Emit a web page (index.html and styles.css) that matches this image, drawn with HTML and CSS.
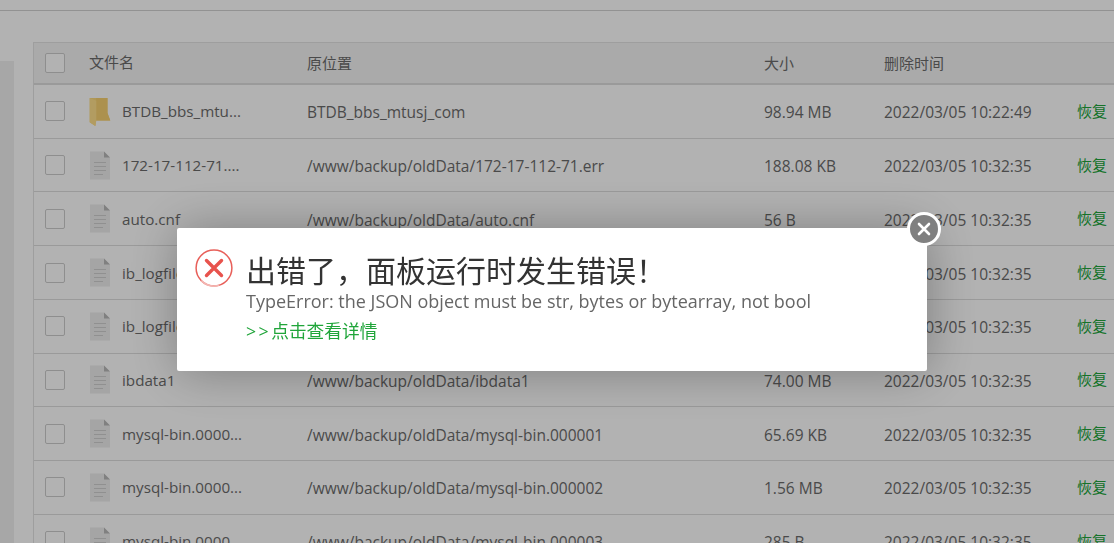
FILE: index.html
```html
<!DOCTYPE html>
<html lang="zh-CN">
<head>
<meta charset="utf-8">
<title>回收站</title>
<link rel="stylesheet" href="styles.css">
</head>
<body>
<svg class="defs" width="0" height="0" aria-hidden="true">
  <symbol id="doc" viewBox="0 0 22 28">
    <path d="M1 0H15L21 6V28H1Z" fill="#ececec"/>
    <path d="M15 0L21 6H15Z" fill="#b8b8b8"/>
    <path d="M5 11H17M5 15H17M5 19H17M5 23H14" stroke="#cfcfcf" stroke-width="1" fill="none"/>
  </symbol>
  <symbol id="folder" viewBox="0 0 22 31">
    <path d="M0 1H19V17L22 25H7L6 31L0 27Z" fill="#fbd87c"/>
    <path d="M7 1H19V17L22 25H7Z" fill="#f6d070"/>
    <path d="M0 1L7 4V25L6 31L0 27Z" fill="#ffe08c"/>
  </symbol>
</svg>
<div class="topbar"></div>
<div class="page">
  <div class="side"></div>
  <div class="table">
    <div class="row head">
      <span class="check"></span>
      <span class="name">文件名</span>
      <span class="path">原位置</span>
      <span class="size">大小</span>
      <span class="time">删除时间</span>
      <span class="act"></span>
    </div>
    <div class="row">
      <span class="check"></span>
      <span class="name"><svg class="ico"><use href="#folder"/></svg>BTDB_bbs_mtu...</span>
      <span class="path">BTDB_bbs_mtusj_com</span>
      <span class="size">98.94 MB</span>
      <span class="time">2022/03/05 10:22:49</span>
      <span class="act">恢复</span>
    </div>
    <div class="row">
      <span class="check"></span>
      <span class="name"><svg class="ico"><use href="#doc"/></svg>172-17-112-71....</span>
      <span class="path">/www/backup/oldData/172-17-112-71.err</span>
      <span class="size">188.08 KB</span>
      <span class="time">2022/03/05 10:32:35</span>
      <span class="act">恢复</span>
    </div>
    <div class="row">
      <span class="check"></span>
      <span class="name"><svg class="ico"><use href="#doc"/></svg>auto.cnf</span>
      <span class="path">/www/backup/oldData/auto.cnf</span>
      <span class="size">56 B</span>
      <span class="time">2022/03/05 10:32:35</span>
      <span class="act">恢复</span>
    </div>
    <div class="row">
      <span class="check"></span>
      <span class="name"><svg class="ico"><use href="#doc"/></svg>ib_logfile0</span>
      <span class="path">/www/backup/oldData/ib_logfile0</span>
      <span class="size">48.00 MB</span>
      <span class="time">2022/03/05 10:32:35</span>
      <span class="act">恢复</span>
    </div>
    <div class="row">
      <span class="check"></span>
      <span class="name"><svg class="ico"><use href="#doc"/></svg>ib_logfile1</span>
      <span class="path">/www/backup/oldData/ib_logfile1</span>
      <span class="size">48.00 MB</span>
      <span class="time">2022/03/05 10:32:35</span>
      <span class="act">恢复</span>
    </div>
    <div class="row">
      <span class="check"></span>
      <span class="name"><svg class="ico"><use href="#doc"/></svg>ibdata1</span>
      <span class="path">/www/backup/oldData/ibdata1</span>
      <span class="size">74.00 MB</span>
      <span class="time">2022/03/05 10:32:35</span>
      <span class="act">恢复</span>
    </div>
    <div class="row">
      <span class="check"></span>
      <span class="name"><svg class="ico"><use href="#doc"/></svg>mysql-bin.0000...</span>
      <span class="path">/www/backup/oldData/mysql-bin.000001</span>
      <span class="size">65.69 KB</span>
      <span class="time">2022/03/05 10:32:35</span>
      <span class="act">恢复</span>
    </div>
    <div class="row">
      <span class="check"></span>
      <span class="name"><svg class="ico"><use href="#doc"/></svg>mysql-bin.0000...</span>
      <span class="path">/www/backup/oldData/mysql-bin.000002</span>
      <span class="size">1.56 MB</span>
      <span class="time">2022/03/05 10:32:35</span>
      <span class="act">恢复</span>
    </div>
    <div class="row">
      <span class="check"></span>
      <span class="name"><svg class="ico"><use href="#doc"/></svg>mysql-bin.0000...</span>
      <span class="path">/www/backup/oldData/mysql-bin.000003</span>
      <span class="size">285 B</span>
      <span class="time">2022/03/05 10:32:35</span>
      <span class="act">恢复</span>
    </div>
  </div>
</div>
<div class="shade"></div>
<div class="dialog">
  <svg class="err" viewBox="0 0 38 38">
    <circle cx="19" cy="19" r="17.9" fill="none" stroke="#e8605a" stroke-width="1.5"/>
    <path d="M6.3 31.7A17.9 17.9 0 0 0 24 36.2" fill="none" stroke="#f3b5b1" stroke-width="1.7"/>
    <path d="M11.5 11.5L26.5 26.5M26.5 11.5L11.5 26.5" stroke="#e8534d" stroke-width="3.4" stroke-linecap="round" fill="none"/>
  </svg>
  <div class="msg">
    <div class="title">出错了，面板运行时发生错误！</div>
    <div class="detail">TypeError: the JSON object must be str, bytes or bytearray, not bool</div>
    <div class="more"><span class="arrows">&gt;&gt;</span>点击查看详情</div>
  </div>
  <div class="close">
    <svg viewBox="0 0 14 14" width="14" height="14"><path d="M2 2L12 12M12 2L2 12" stroke="#fff" stroke-width="2.6" stroke-linecap="round"/></svg>
  </div>
</div>
</body>
</html>
```

FILE: styles.css
```css
* { box-sizing: border-box; }
html, body { margin: 0; height: 543px; overflow: hidden; }
body {
  background: #fff;
  font-family: "Open Sans", "Noto Sans CJK SC", sans-serif;
  color: #666;
}
.defs { position: absolute; }
.topbar { height: 11px; border-bottom: 1px solid #d2d2d2; }
.page { display: flex; align-items: flex-start; }
.side { width: 14px; height: 482px; margin-top: 50px; background: #efefef; flex: none; }
.table {
  margin: 31px 0 0 19px;
  width: 1120px;
  flex: none;
  border-left: 1px solid #e3e3e3;
  border-top: 1px solid #e3e3e3;
}
.row {
  display: grid;
  grid-template-columns: 55px 218px 457px 120px 193px 80px;
  align-items: center;
  height: 53.72px;
  border-bottom: 1px solid #ddd;
  font-size: 15.5px;
  color: #6b6b6b;
}
.row.head {
  height: 42px;
  background: #f4f4f4;
  border-bottom: 2px solid #ddd;
  font-size: 15px;
}
.check {
  width: 20px;
  height: 20px;
  margin-left: 11px;
  border: 1px solid #ccc;
  border-radius: 2px;
  background: #fff;
}
.name { display: flex; align-items: center; white-space: nowrap; overflow: hidden; font-size: 15.2px; line-height: 29px; padding-top: 1px; }
.ico { width: 22px; height: 29px; margin-right: 11px; flex: none; margin-top: -1px; }
.path, .size, .time { white-space: nowrap; padding-top: 2px; }
.head .name { font-size: 15px; padding-top: 0; margin-top: -2px; }
.head .path, .head .size, .head .time { padding-top: 0; margin-top: -2px; }
.act { color: #20a53a; font-size: 15px; margin-top: -2px; }
.shade { position: fixed; inset: 0; background: rgba(0, 0, 0, 0.3); }
.dialog {
  position: fixed;
  left: 177px;
  top: 228px;
  width: 750px;
  height: 143px;
  background: #fff;
  border-radius: 2px;
  box-shadow: 1px 1px 50px rgba(0, 0, 0, 0.3);
  display: flex;
  padding: 21px 0 0 18px;
}
.err { width: 38px; height: 38px; flex: none; }
.msg { margin-left: 13px; }
.title { font-size: 30px; line-height: 44px; color: #333; white-space: nowrap; }
.detail { font-size: 18px; line-height: 20px; color: #666; white-space: nowrap; margin-top: -2px; }
.more { font-size: 17.7px; line-height: 24px; color: #20a53a; margin-top: 8px; }
.arrows { letter-spacing: 2.5px; }
.close {
  position: absolute;
  left: 730px;
  top: -16px;
  width: 34px;
  height: 34px;
  border-radius: 50%;
  background: #808080;
  border: 3px solid #fff;
  display: flex;
  align-items: center;
  justify-content: center;
}
```
